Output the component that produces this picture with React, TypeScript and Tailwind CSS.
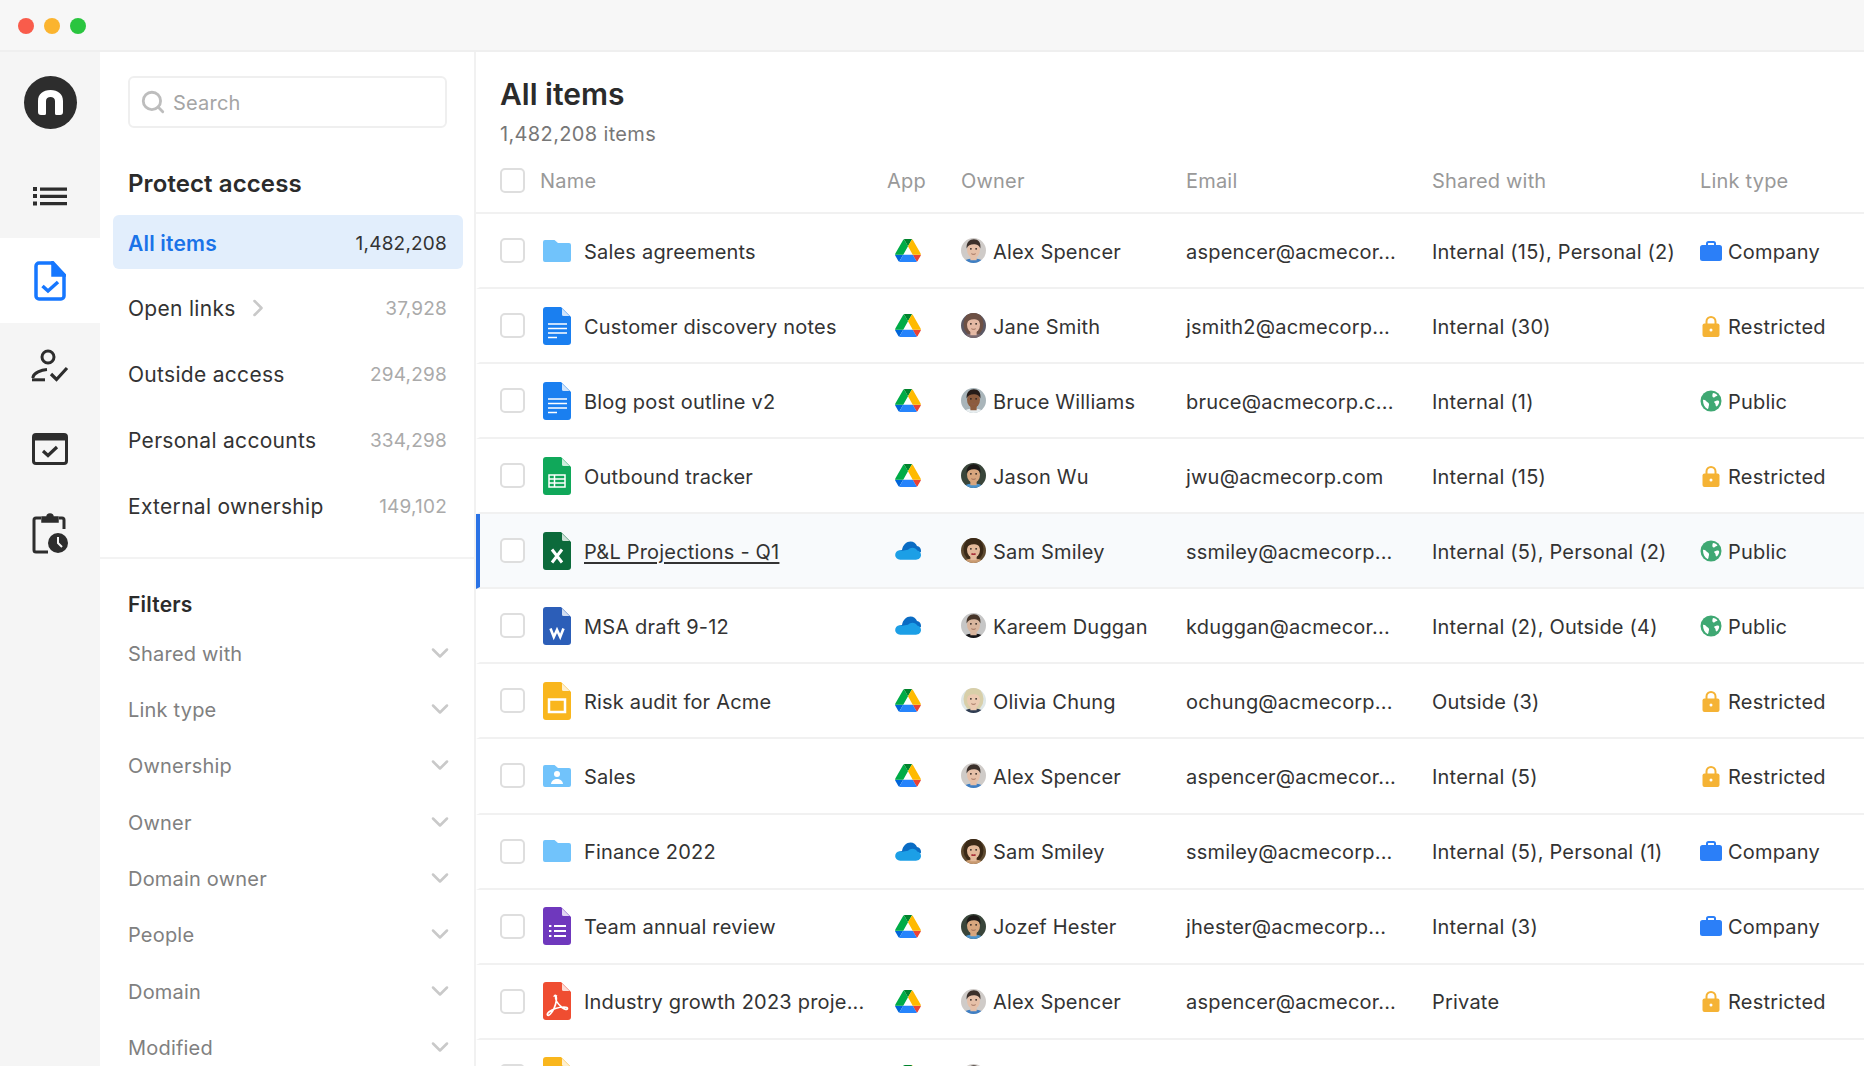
import { ChevronDown, ChevronRight, Search } from "lucide-react";

type FileKind = "folder" | "shared" | "doc" | "sheet" | "excel" | "word" | "slides" | "form" | "pdf";
type AppKind = "drive" | "onedrive";
type LinkKind = "Company" | "Restricted" | "Public";

interface Row {
  kind: FileKind;
  name: string;
  app: AppKind;
  owner: string;
  email: string;
  shared: string;
  link?: LinkKind;
  selected?: boolean;
}

const rows: Row[] = [
  { kind: "folder", name: "Sales agreements", app: "drive", owner: "Alex Spencer", email: "aspencer@acmecor...", shared: "Internal (15), Personal (2)", link: "Company" },
  { kind: "doc", name: "Customer discovery notes", app: "drive", owner: "Jane Smith", email: "jsmith2@acmecorp...", shared: "Internal (30)", link: "Restricted" },
  { kind: "doc", name: "Blog post outline v2", app: "drive", owner: "Bruce Williams", email: "bruce@acmecorp.c...", shared: "Internal (1)", link: "Public" },
  { kind: "sheet", name: "Outbound tracker", app: "drive", owner: "Jason Wu", email: "jwu@acmecorp.com", shared: "Internal (15)", link: "Restricted" },
  { kind: "excel", name: "P&L Projections - Q1", app: "onedrive", owner: "Sam Smiley", email: "ssmiley@acmecorp...", shared: "Internal (5), Personal (2)", link: "Public", selected: true },
  { kind: "word", name: "MSA draft 9-12", app: "onedrive", owner: "Kareem Duggan", email: "kduggan@acmecor...", shared: "Internal (2), Outside (4)", link: "Public" },
  { kind: "slides", name: "Risk audit for Acme", app: "drive", owner: "Olivia Chung", email: "ochung@acmecorp...", shared: "Outside (3)", link: "Restricted" },
  { kind: "shared", name: "Sales", app: "drive", owner: "Alex Spencer", email: "aspencer@acmecor...", shared: "Internal (5)", link: "Restricted" },
  { kind: "folder", name: "Finance 2022", app: "onedrive", owner: "Sam Smiley", email: "ssmiley@acmecorp...", shared: "Internal (5), Personal (1)", link: "Company" },
  { kind: "form", name: "Team annual review", app: "drive", owner: "Jozef Hester", email: "jhester@acmecorp...", shared: "Internal (3)", link: "Company" },
  { kind: "pdf", name: "Industry growth 2023 proje...", app: "drive", owner: "Alex Spencer", email: "aspencer@acmecor...", shared: "Private", link: "Restricted" },
  { kind: "slides", name: "", app: "drive", owner: "Alex Spencer", email: "", shared: "" },
];

const protectLinks = [
  { label: "Open links", count: "37,928", arrow: true },
  { label: "Outside access", count: "294,298" },
  { label: "Personal accounts", count: "334,298" },
  { label: "External ownership", count: "149,102" },
];

const filters = ["Shared with", "Link type", "Ownership", "Owner", "Domain owner", "People", "Domain", "Modified"];

const faces: Record<string, { bg: string; skin: string; hair: string; shirt: string; lips?: string; long?: boolean }> = {
  "Alex Spencer": { bg: "#cfcbc8", skin: "#e6c0a8", hair: "#3b302b", shirt: "#3f7fc4" },
  "Jane Smith": { bg: "#5b5864", skin: "#e5b9a4", hair: "#6d5044", shirt: "#7a6a70", long: true },
  "Bruce Williams": { bg: "#a9b5ba", skin: "#8c5c3e", hair: "#261c18", shirt: "#e8eef0" },
  "Jason Wu": { bg: "#39453a", skin: "#d8a67e", hair: "#1c1917", shirt: "#4b93cc" },
  "Jozef Hester": { bg: "#39453a", skin: "#d8a67e", hair: "#1c1917", shirt: "#4b93cc" },
  "Sam Smiley": { bg: "#5e4a30", skin: "#e3b99a", hair: "#3a2917", shirt: "#c89a70", lips: "#a8303a", long: true },
  "Kareem Duggan": { bg: "#c6c6c6", skin: "#d9b69e", hair: "#463529", shirt: "#17171a" },
  "Olivia Chung": { bg: "#dfe7e7", skin: "#eccbb2", hair: "#d8cfa9", shirt: "#2f3c52", long: true },
};

function Avatar({ name }: { name: string }) {
  const f = faces[name];
  return (
    <svg viewBox="0 0 25 25" className="w-[25px] h-[25px] shrink-0 rounded-full">
      <rect width="25" height="25" fill={f.bg} />
      <g transform="translate(12.5 11) scale(1.25) translate(-12.5 -11)">
        {f.long && <ellipse cx="12.5" cy="11" rx="8" ry="9.5" fill={f.hair} />}
        <ellipse cx="12.5" cy="24" rx="10.5" ry="5.5" fill={f.shirt} />
        <rect x="10" y="15" width="5" height="5" fill={f.skin} />
        <ellipse cx="12.5" cy="11.5" rx="5.2" ry="6.6" fill={f.skin} />
        <path d="M7 10.5C6.6 5.5 9.5 3.2 12.8 3.2c3.4 0 5.8 2.4 5.2 7.3-1-2.6-2.6-3.4-5.4-3.4-2.6 0-4.6.8-5.6 3.4z" fill={f.hair} />
        <circle cx="10.4" cy="10.8" r=".7" fill="#2b2320" />
        <circle cx="14.6" cy="10.8" r=".7" fill="#2b2320" />
        <path d="M10.8 14.8c1.1.6 2.3.6 3.4 0" fill="none" stroke={f.lips ?? "#8f5f4e"} strokeWidth={f.lips ? 1.2 : 0.7} />
      </g>
    </svg>
  );
}

function DriveIcon() {
  return (
    <svg viewBox="0 0 87.3 78" className="w-[26px] h-[23px]">
      <path d="m6.6 66.85 3.85 6.65c.8 1.4 1.95 2.5 3.3 3.3l13.75-23.8h-27.5c0 1.55.4 3.1 1.2 4.5z" fill="#0066da" />
      <path d="m43.65 25-13.75-23.8c-1.35.8-2.5 1.9-3.3 3.3l-25.4 44a9.06 9.06 0 0 0 -1.2 4.5h27.5z" fill="#00ac47" />
      <path d="m73.55 76.8c1.35-.8 2.5-1.9 3.3-3.3l1.6-2.75 7.65-13.25c.8-1.4 1.2-2.95 1.2-4.5h-27.502l5.852 11.5z" fill="#ea4335" />
      <path d="m43.65 25 13.75-23.8c-1.35-.8-2.9-1.2-4.5-1.2h-18.5c-1.6 0-3.15.45-4.5 1.2z" fill="#00832d" />
      <path d="m59.8 53h-32.3l-13.75 23.8c1.35.8 2.9 1.2 4.5 1.2h50.8c1.6 0 3.15-.45 4.5-1.2z" fill="#2684fc" />
      <path d="m73.4 26.5-12.7-22c-.8-1.4-1.95-2.5-3.3-3.3l-13.75 23.8 16.15 28h27.45c0-1.55-.4-3.1-1.2-4.5z" fill="#ffba00" />
    </svg>
  );
}

function OneDriveIcon() {
  return (
    <svg viewBox="0 0 26 19" className="w-[26px] h-[19px]">
      <path d="M7 9C8 3.500 11.500.5 15.500.5c3 0 5.500 1.800 6.500 4.500 2.300.3 4 2.300 4 4.800 0 .5 0 1-.2 1.500H3C3.500 10 5 9 7 9z" fill="#0a6cc4" />
      <path d="M4.500 9.200C2 9.500.2 11.500.2 14c0 2.500 2.200 4.700 5 4.700H21c2.800 0 5-2.100 5-4.700 0-2.300-1.700-4.200-3.800-4.500-.9-1.600-2.700-2.700-4.700-2.700-1.700 0-3.300.8-4.500 2-2.800.2-5.500 1.500-8.500.4z" fill="#1c9fe6" />
    </svg>
  );
}

function AppIcon({ app }: { app: AppKind }) {
  return <div className="w-[26px] flex justify-center">{app === "drive" ? <DriveIcon /> : <OneDriveIcon />}</div>;
}

const sheetPath = "M3 0h15l10 10v25a3 3 0 0 1-3 3H3a3 3 0 0 1-3-3V3a3 3 0 0 1 3-3z";

function Sheet({ color, children }: { color: string; children?: React.ReactNode }) {
  return (
    <svg viewBox="0 0 28 38" className="w-[28px] h-[38px]">
      <path d={sheetPath} fill={color} />
      <path d="M19 1.500 26.500 9H20.500a1.500 1.500 0 0 1-1.500-1.500z" fill="#fff" fillOpacity=".8" />
      {children}
    </svg>
  );
}

function FileIcon({ kind }: { kind: FileKind }) {
  if (kind === "folder" || kind === "shared") {
    return (
      <svg viewBox="0 0 28 22" className="w-[28px] h-[22px]">
        <path d="M2 0h9.500l3.500 3h11a2 2 0 0 1 2 2v15a2 2 0 0 1-2 2H2a2 2 0 0 1-2-2V2a2 2 0 0 1 2-2z" fill="#71c3fb" />
        {kind === "shared" && (
          <>
            <circle cx="14" cy="9" r="3" fill="#fff" />
            <path d="M8 19c.4-3.500 3-5 6-5s5.600 1.500 6 5z" fill="#fff" />
          </>
        )}
      </svg>
    );
  }
  if (kind === "doc") {
    return (
      <Sheet color="#1a7ff0">
        <path d="M5 17h19M5 21.500h19M5 26h19M5 30.500h9" stroke="#fff" strokeWidth="1.500" />
      </Sheet>
    );
  }
  if (kind === "sheet") {
    return (
      <Sheet color="#10a85a">
        <path d="M6 18h16v12H6z" fill="none" stroke="#fff" strokeWidth="1.500" />
        <path d="M6 22h16M6 26h16M11.500 18v12" stroke="#fff" strokeWidth="1.500" />
      </Sheet>
    );
  }
  if (kind === "excel") {
    return (
      <Sheet color="#0c6a3b">
        <path d="M9 17.500l10 13M19 17.500l-10 13" stroke="#fff" strokeWidth="3" />
      </Sheet>
    );
  }
  if (kind === "word") {
    return (
      <Sheet color="#2c5eb8">
        <path d="M7.500 21.500l3.300 8.500 3.200-7 3.200 7 3.300-8.500" fill="none" stroke="#fff" strokeWidth="2.600" />
      </Sheet>
    );
  }
  if (kind === "slides") {
    return (
      <Sheet color="#f9b61d">
        <path d="M6 17.500h16v12.500H6z" fill="none" stroke="#fff" strokeWidth="2.500" />
      </Sheet>
    );
  }
  if (kind === "form") {
    return (
      <Sheet color="#6f38bd">
        <path d="M11 19h12M11 24h12M11 29h12" stroke="#fff" strokeWidth="1.800" />
        <path d="M6 18h2.400v2H6zM6 23h2.400v2H6zM6 28h2.400v2H6z" fill="#fff" />
      </Sheet>
    );
  }
  return (
    <Sheet color="#ef4d31">
      <path d="M13 14c-1.500 3 2 8 6 11.500 2.500 2 5.500 2.500 5.500 1 0-2-6-2-12 0-5 1.500-9 5-8 6.500 1 1.500 4.500-2 6.500-6.500 1.300-3 3-9.500 2-12.500-.4-1-1-1-1.500 0z" fill="none" stroke="#fff" strokeWidth="1.700" />
    </Sheet>
  );
}

function LinkIcon({ link }: { link: LinkKind }) {
  if (link === "Company") {
    return (
      <svg viewBox="0 0 22 20" className="w-[22px] h-[20px]">
        <path d="M7 4.500V2.500a1.500 1.500 0 0 1 1.500-1.500h5A1.500 1.500 0 0 1 15 2.500v2" fill="none" stroke="#2b7ff8" strokeWidth="2" />
        <rect y="4" width="22" height="16" rx="2.500" fill="#2b7ff8" />
      </svg>
    );
  }
  if (link === "Restricted") {
    return (
      <svg viewBox="0 0 22 22" className="w-[22px] h-[22px]">
        <path d="M6.500 10V6.500a4.500 4.500 0 0 1 9 0V10" fill="none" stroke="#f5b335" strokeWidth="2" />
        <rect x="2.500" y="8.500" width="17" height="13.500" rx="2" fill="#f5b335" />
        <circle cx="11" cy="15" r="1.500" fill="#fff" />
      </svg>
    );
  }
  return (
    <svg viewBox="0 0 22 22" className="w-[22px] h-[22px]">
      <circle cx="11" cy="11" r="10.500" fill="#3fa873" />
      <path d="M3 10c1.500-.5 2.500.5 3.500 1.500.8 1 2 1 2.500 2.500.3 1.200-.5 2-.5 3.500-.1.800-.5 1.500-1 1.500C4.500 17.500 3 14 3 10zM13 3c2 .3 3.500 1.200 4.500 2.500-1 .7-2 .5-2.500 1.500-.5.800-2.200.5-2.500-.5-.3-1 0-2.500.5-3.500zM14 12c1-1 2.500-1.500 4-1.500 1 .2 1.500 1 1 2.500-.5 1.500-1.500 3-2.500 3.500-.8-.5-1-1.500-1-2.500-.3-.8-1-1-1.500-2z" fill="#fff" />
    </svg>
  );
}

function RailIcons() {
  return (
    <>
      <div className="h-[84px] w-full flex items-center justify-center">
        <svg viewBox="0 0 36 20" className="w-[36px] h-[20px]" fill="#2d2d2d">
          <path d="M1 1h4v4H1zM1 8h4v4H1zM1 15.500h4v4H1zM8 1.500h27v3.300H8zM8 8.800h27v3.300H8zM8 16h27v3.300H8z" />
        </svg>
      </div>
      <div className="h-[85px] w-full bg-white flex items-center justify-center">
        <svg viewBox="0 0 32 40" className="w-[32px] h-[40px]" fill="none" stroke="#1677ff" strokeWidth="3.500">
          <path d="M5 2h13l12 12v21a3 3 0 0 1-3 3H5a3 3 0 0 1-3-3V5a3 3 0 0 1 3-3z" />
          <path d="M19 2l11 12H19z" fill="#1677ff" />
          <path d="M8.500 25l5.500 5 10-9" />
        </svg>
      </div>
      <div className="h-[84px] w-full flex items-center justify-center">
        <svg viewBox="0 0 38 33" className="w-[38px] h-[33px]" fill="none" stroke="#2d2d2d">
          <circle cx="17" cy="8" r="6" strokeWidth="3" />
          <path d="M2 29v-1c1-4 8-7 14-7.500" strokeWidth="3" />
          <path d="M1 30.800h13" strokeWidth="3" />
          <path d="M20 25l5.500 5.500L36 19" strokeWidth="3.200" />
        </svg>
      </div>
      <div className="h-[84px] w-full flex items-center justify-center">
        <svg viewBox="0 0 36 32" className="w-[36px] h-[32px]" fill="none" stroke="#2d2d2d" strokeWidth="3">
          <rect x="1.500" y="1.500" width="33" height="29" rx="2.500" />
          <path d="M2 5h32" strokeWidth="5" />
          <path d="M11 18l5 4.500 9-8.500" strokeWidth="3.200" />
        </svg>
      </div>
      <div className="h-[84px] w-full flex items-center justify-center">
        <svg viewBox="0 0 36 42" className="w-[36px] h-[42px]" fill="none" stroke="#2d2d2d" strokeWidth="3">
          <path d="M9 6H4a2 2 0 0 0-2 2v30a2 2 0 0 0 2 2h12M27 6h3a2 2 0 0 1 2 2v9" />
          <path d="M10 10V5h5a3 3 0 0 1 6 0h5v5z" fill="#2d2d2d" strokeWidth="1.500" />
          <circle cx="26" cy="31" r="10" fill="#2d2d2d" stroke="none" />
          <path d="M26 25v6l4 4" stroke="#f5f5f5" strokeWidth="2" />
        </svg>
      </div>
    </>
  );
}

export default function App() {
  return (
    <div className="h-screen w-full overflow-hidden flex flex-col bg-white font-[Inter,sans-serif] text-[#333] text-[20px] tracking-[0.2px]">
      {/* Window bar */}
      <div className="h-[52px] shrink-0 bg-[#f7f7f7] border-b-2 border-[#efefef] flex items-center gap-[10px] pl-[18px] pt-[1px]">
        <span className="w-4 h-4 rounded-full bg-[#f95c4b]" />
        <span className="w-4 h-4 rounded-full bg-[#fbb42f]" />
        <span className="w-4 h-4 rounded-full bg-[#2ac53f]" />
      </div>

      <div className="flex-1 flex min-h-0">
        {/* Rail */}
        <div className="w-[100px] shrink-0 bg-[#f5f5f5] flex flex-col">
          <div className="h-[102px] flex justify-center pt-6">
            <div className="w-[53px] h-[53px] rounded-full bg-[#2d2d2d] flex items-center justify-center">
              <svg viewBox="0 0 25 25" className="w-[25px] h-[25px]">
                <path d="M0 22V11C0 4 5 0 12.500 0S25 4 25 11v11a3 3 0 0 1-3 3h-3.500a1.500 1.500 0 0 1-1.500-1.500V11c0-2.500-2-4-4.500-4S8 8.500 8 11v12.500A1.500 1.500 0 0 1 6.500 25H3a3 3 0 0 1-3-3z" fill="#fff" />
              </svg>
            </div>
          </div>
          <RailIcons />
        </div>

        {/* Sidebar */}
        <div className="w-[376px] shrink-0 border-r-2 border-[#f1f1f1]">
          <div className="pl-[28px] pr-[27px] pt-6">
            <div className="h-[52px] border-2 border-[#efefef] rounded-md flex items-center gap-[7px] pl-[10px] text-[#a5a5a5]">
              <Search className="w-[26px] h-[26px] text-[#bdbdbd]" strokeWidth={2.6} />
              <span className="pt-[2px]">Search</span>
            </div>
            <h2 className="mt-[41px] text-[24px] leading-[30px] font-semibold text-[#2b2b2b] tracking-[0.1px]">Protect access</h2>
          </div>

          <div className="mt-4 ml-[13px] mr-[11px] flex flex-col gap-[11.7px] text-[21px] tracking-[0.3px]">
            <div className="h-[54px] pl-[15px] pr-4 rounded-md bg-[#e2eefc] flex items-center justify-between">
              <span className="pt-[3px] font-semibold text-[#1a73e8] tracking-[0.2px]">All items</span>
              <span className="pt-[4px] text-[19px] text-[#333] tracking-[0.2px]">1,482,208</span>
            </div>
            {protectLinks.map(item => (
              <div key={item.label} className="h-[54px] pl-[15px] pr-4 flex items-center justify-between">
                <span className="flex items-center gap-2">
                  <span className="pt-[3px]">{item.label}</span>
                  {item.arrow && <ChevronRight className="w-7 h-7 text-[#c9c9c9]" strokeWidth={2.2} />}
                </span>
                <span className="pt-[4px] text-[19px] text-[#aaa] tracking-[0.2px]">{item.count}</span>
              </div>
            ))}
          </div>

          <div className="mt-[25px] border-t-2 border-[#f3f3f3] pl-[28px] pr-[20px]">
            <div className="mt-[31px] text-[21px] font-semibold text-[#2b2b2b] leading-[30px]">Filters</div>
            <div className="mt-[5px] flex flex-col">
              {filters.map(label => (
                <div key={label} className="h-[56.3px] flex items-center justify-between text-[#808080]">
                  <span className="pt-[2px]">{label}</span>
                  <ChevronDown className="w-7 h-7 text-[#c9c9c9]" strokeWidth={2.2} />
                </div>
              ))}
            </div>
          </div>
        </div>

        {/* Table */}
        <div className="flex-1 min-w-0">
          <div className="pl-6 pt-6">
            <h1 className="text-[30px] leading-[36px] font-semibold text-[#2b2b2b] tracking-normal">All items</h1>
            <p className="mt-2 pt-[1px] leading-[27px] text-[#777] tracking-[0.35px]">1,482,208 items</p>
          </div>

          <div className="h-[66px] pl-6 grid grid-cols-[40px_347px_74px_225px_246px_268px_1fr] items-center border-b-2 border-[#f1f1f1] text-[#999]">
            <span className="w-[25px] h-[25px] rounded-[5px] border-2 border-[#dedede] bg-white" />
            <span className="pt-[2px]">Name</span>
            <span className="pt-[2px]">App</span>
            <span className="pt-[2px]">Owner</span>
            <span className="pt-[2px]">Email</span>
            <span className="pt-[2px]">Shared with</span>
            <span className="pt-[2px]">Link type</span>
          </div>

          {rows.map((row, i) => (
            <div
              key={i}
              className={
                row.selected
                  ? "h-[75.07px] pl-5 border-l-4 border-l-[#2a72e5] bg-[#f8fafc] border-b-2 border-b-[#f1f1f1] grid grid-cols-[43px_41px_311px_66px_32px_193px_246px_268px_1fr] items-center"
                  : "h-[75.07px] pl-5 border-l-4 border-l-transparent border-b-2 border-b-[#f1f1f1] grid grid-cols-[43px_41px_311px_66px_32px_193px_246px_268px_1fr] items-center"
              }
            >
              <span className="w-[25px] h-[25px] rounded-[5px] border-2 border-[#dedede] bg-white" />
              <span className="flex items-center"><FileIcon kind={row.kind} /></span>
              <span className={row.selected ? "pt-[2px] underline underline-offset-[3px] decoration-[1.5px]" : "pt-[2px]"}>{row.name}</span>
              <AppIcon app={row.app} />
              <Avatar name={row.owner} />
              <span className="pt-[2px]">{row.email ? row.owner : ""}</span>
              <span className="pt-[2px]">{row.email}</span>
              <span className="pt-[2px]">{row.shared}</span>
              {row.link ? (
                <span className="flex items-center gap-[6px]">
                  <LinkIcon link={row.link} />
                  <span className="pt-[2px]">{row.link}</span>
                </span>
              ) : (
                <span />
              )}
            </div>
          ))}
        </div>
      </div>
    </div>
  );
}
